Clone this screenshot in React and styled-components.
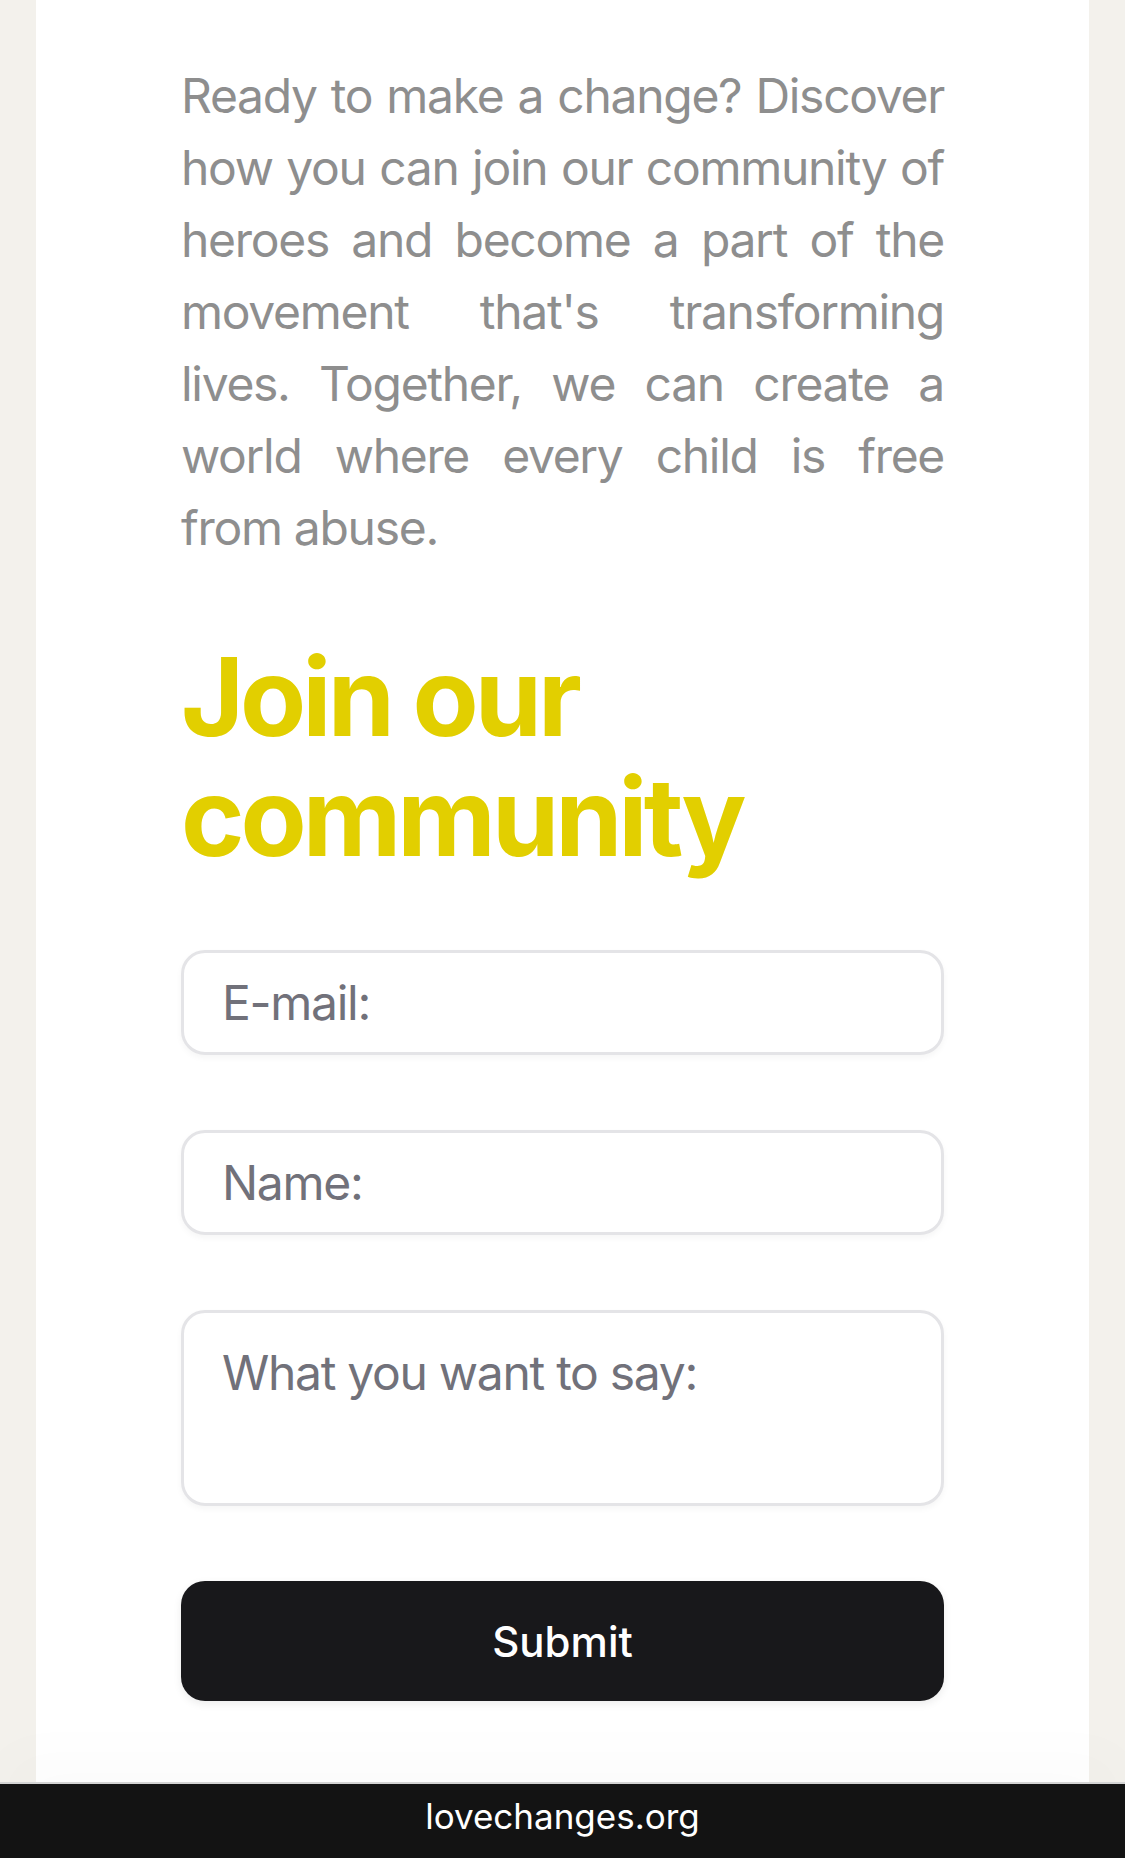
import React from "react";
import styled, { createGlobalStyle } from "styled-components";

const Global = createGlobalStyle`
  html, body { margin: 0; padding: 0; }
  body {
    background: #f3f1ec;
    font-family: Inter, "Noto Sans", sans-serif;
    -webkit-font-smoothing: antialiased;
  }
  * { box-sizing: border-box; }
`;

const Page = styled.div`
  display: flex;
  flex-direction: column;
  min-height: 1858px;
`;

const Card = styled.main`
  flex: 1;
  margin: 0 36px;
  background: #ffffff;
  padding: 60px 145px 81px;
  display: flex;
  flex-direction: column;
`;

const Intro = styled.p`
  margin: 0;
  font-size: 48px;
  line-height: 72px;
  color: #8e8e8e;
  text-align: justify;
  letter-spacing: -1.3px;
`;

const Heading = styled.h2`
  margin: 73px 0 73px;
  font-size: 108px;
  line-height: 120px;
  font-weight: 700;
  color: #e2cf00;
  letter-spacing: -4px;
`;

const Form = styled.form`
  display: flex;
  flex-direction: column;
  gap: 75px;
`;

const fieldBase = `
  width: 100%;
  border: 3px solid #e4e4e7;
  border-radius: 24px;
  background: #ffffff;
  box-shadow: 0 3px 6px rgba(0, 0, 0, 0.04);
  font-family: Inter, "Noto Sans", sans-serif;
  font-size: 48px;
  letter-spacing: -1.3px;
  color: #18181b;
  padding: 0 38px;
  outline: none;
  &::placeholder { color: #71717a; opacity: 1; }
`;

const Input = styled.input`
  ${fieldBase}
  height: 105px;
`;

const TextArea = styled.textarea`
  ${fieldBase}
  height: 196px;
  padding-top: 30px;
  line-height: 60px;
  resize: none;
`;

const Button = styled.button`
  height: 120px;
  border: none;
  border-radius: 24px;
  background: #18181b;
  color: #ffffff;
  font-family: Inter, "Noto Sans", sans-serif;
  font-size: 42px;
  font-weight: 500;
  box-shadow: 0 3px 8px rgba(0, 0, 0, 0.08);
  cursor: pointer;
`;

const Footer = styled.footer`
  height: 78px;
  padding-bottom: 12px;
  background: #131313;
  border-top: 2px solid #d4d4d4;
  color: #ffffff;
  display: flex;
  align-items: center;
  justify-content: center;
  font-size: 35px;
  box-shadow: 0 -30px 60px rgba(0, 0, 0, 0.015);
`;

export default function App() {
  return (
    <Page>
      <Global />
      <Card>
        <Intro>
          Ready to make a change? Discover how you can join our community of
          heroes and become a part of the movement that's transforming lives.
          Together, we can create a world where every child is free from abuse.
        </Intro>
        <Heading>Join our community</Heading>
        <Form onSubmit={(e) => e.preventDefault()}>
          <Input type="email" placeholder="E-mail:" />
          <Input type="text" placeholder="Name:" />
          <TextArea placeholder="What you want to say:" />
          <Button type="submit">Submit</Button>
        </Form>
      </Card>
      <Footer>lovechanges.org</Footer>
    </Page>
  );
}
